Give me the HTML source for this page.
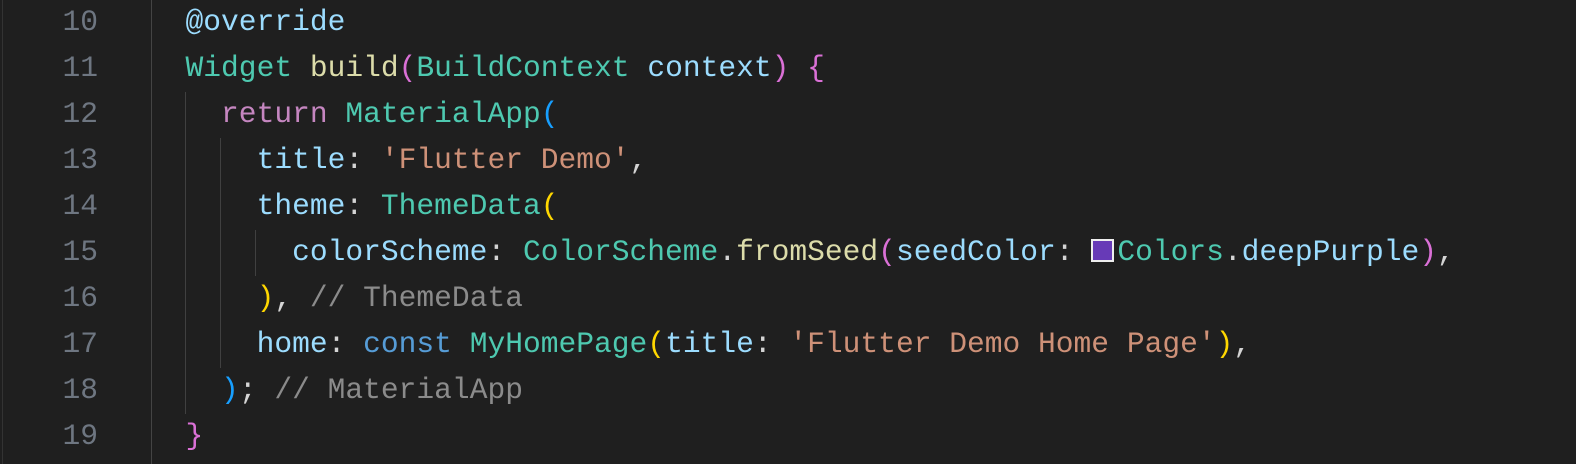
<!DOCTYPE html><html><head><style>
body{margin:0;width:1576px;height:464px;background:#1f1f1f;overflow:hidden;position:relative;font-family:"Liberation Mono",monospace;font-size:29.6px;}
.l{position:absolute;left:0;height:46px;line-height:46px;white-space:pre;color:#d4d4d4;}
.n{position:absolute;left:0;width:98px;text-align:right;color:#6e7681;}
.c{position:absolute;left:150px;}
.t{color:#4ec9b0}.f{color:#dcdcaa}.v{color:#9cdcfe}.k{color:#c586c0}.s{color:#ce9178}.b{color:#569cd6}
.y{color:#ffd700}.p{color:#da70d6}.bl{color:#179fff}.g{color:#8b8b8b}
.sw{display:inline-block;width:19px;height:19px;background:#673ab7;border:2px solid #eee;vertical-align:-2px;margin:0 3px 0 0;}
.vl{position:absolute;width:1px;background:#404040}
</style></head><body>
<div class="vl" style="left:2px;top:0;height:464px;background:#333"></div>
<div class="vl" style="left:151px;top:0;height:464px;background:#444"></div>
<div class="vl" style="left:185px;top:92px;height:322px"></div>
<div class="vl" style="left:220px;top:138px;height:230px"></div>
<div class="vl" style="left:255px;top:230px;height:46px"></div>
<div class="l" style="top:-1px"><span class="n">10</span><span class="c">  <span class="v">@override</span></span></div>
<div class="l" style="top:45px"><span class="n">11</span><span class="c">  <span class="t">Widget</span> <span class="f">build</span><span class="p">(</span><span class="t">BuildContext</span> <span class="v">context</span><span class="p">)</span> <span class="p">{</span></span></div>
<div class="l" style="top:91px"><span class="n">12</span><span class="c">    <span class="k">return</span> <span class="t">MaterialApp</span><span class="bl">(</span></span></div>
<div class="l" style="top:137px"><span class="n">13</span><span class="c">      <span class="v">title</span>: <span class="s">'Flutter Demo'</span>,</span></div>
<div class="l" style="top:183px"><span class="n">14</span><span class="c">      <span class="v">theme</span>: <span class="t">ThemeData</span><span class="y">(</span></span></div>
<div class="l" style="top:229px"><span class="n">15</span><span class="c">        <span class="v">colorScheme</span>: <span class="t">ColorScheme</span>.<span class="f">fromSeed</span><span class="p">(</span><span class="v">seedColor</span>: <span class="sw"></span><span class="t">Colors</span>.<span class="v">deepPurple</span><span class="p">)</span>,</span></div>
<div class="l" style="top:275px"><span class="n">16</span><span class="c">      <span class="y">)</span>, <span class="g">// ThemeData</span></span></div>
<div class="l" style="top:321px"><span class="n">17</span><span class="c">      <span class="v">home</span>: <span class="b">const</span> <span class="t">MyHomePage</span><span class="y">(</span><span class="v">title</span>: <span class="s">'Flutter Demo Home Page'</span><span class="y">)</span>,</span></div>
<div class="l" style="top:367px"><span class="n">18</span><span class="c">    <span class="bl">)</span>; <span class="g">// MaterialApp</span></span></div>
<div class="l" style="top:413px"><span class="n">19</span><span class="c">  <span class="p">}</span></span></div>
</body></html>
